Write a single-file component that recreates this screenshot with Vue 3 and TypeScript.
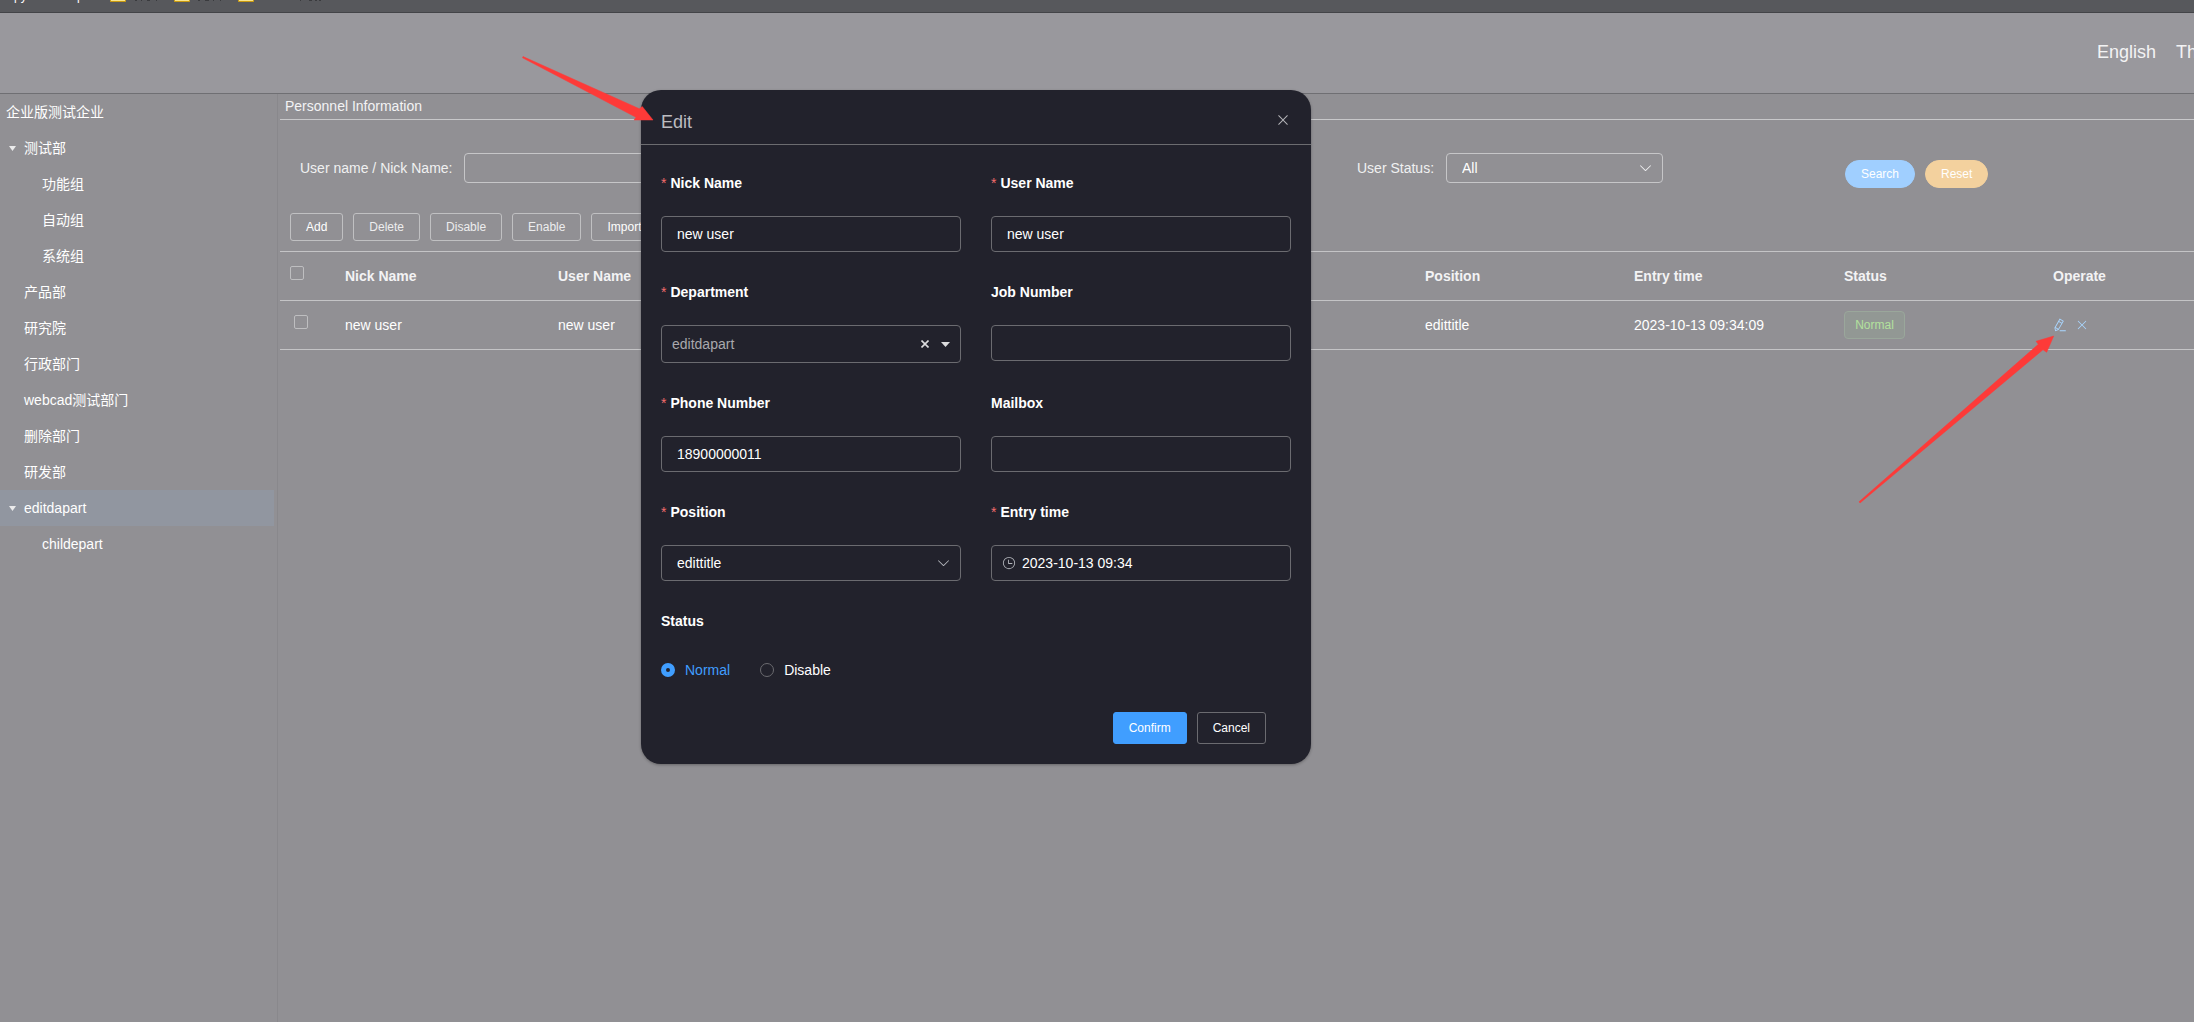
<script setup lang="ts">
import { ref } from 'vue'

interface Dept {
  name: string
  level: number
  open?: boolean
}

const departments: Dept[] = [
  { name: '企业版测试企业', level: 0 },
  { name: '测试部', level: 1, open: true },
  { name: '功能组', level: 2 },
  { name: '自动组', level: 2 },
  { name: '系统组', level: 2 },
  { name: '产品部', level: 1 },
  { name: '研究院', level: 1 },
  { name: '行政部门', level: 1 },
  { name: 'webcad测试部门', level: 1 },
  { name: '删除部门', level: 1 },
  { name: '研发部', level: 1 },
  { name: 'editdapart', level: 1, open: true },
  { name: 'childepart', level: 2 },
]
const current = ref('editdapart')

const keyword = ref('')
const statusFilter = ref('All')
const form = ref({
  nick: 'new user',
  user: 'new user',
  dept: 'editdapart',
  job: '',
  phone: '18900000011',
  mail: '',
  position: 'edittitle',
  entry: '2023-10-13 09:34',
  status: 'Normal',
})

const closePath =
  'M764.288 214.592 512 466.88 259.712 214.592a31.936 31.936 0 0 0-45.12 45.12L466.752 512 214.528 764.224a31.936 31.936 0 1 0 45.12 45.184L512 557.184l252.288 252.288a31.936 31.936 0 0 0 45.12-45.12L557.12 512.064l252.288-252.352a31.936 31.936 0 1 0-45.12-45.184z'
const downPath =
  'M831.872 340.864 512 652.672 192.128 340.864a30.592 30.592 0 0 0-42.752 0 29.12 29.12 0 0 0 0 41.6L489.664 714.24a32 32 0 0 0 44.672 0l340.288-331.712a29.12 29.12 0 0 0 0-41.728 30.592 30.592 0 0 0-42.752 0z'
const penPath =
  'm199.04 672.64 193.984 112 224-387.968-193.92-112-224 388.032zm-23.872 60.16 32.896 148.288 144.896-45.696L175.168 732.8zM455.04 229.248l193.92 112 56.704-98.112-193.984-112-56.64 98.112zM104.32 708.8l384-665.024 304.768 175.936L409.152 884.8h.064l-248.448 78.336L104.32 708.8zm384 254.272v-64h448v64h-448z'
const clockPath =
  'M512 896a384 384 0 1 0 0-768 384 384 0 0 0 0 768m0 64a448 448 0 1 1 0-896 448 448 0 0 1 0 896M480 256a32 32 0 0 1 32 32v256a32 32 0 0 1-64 0V288a32 32 0 0 1 32-32M480 512h256q32 0 32 32t-32 32H480q-32 0-32-32t32-32'
</script>

<template>
  <div class="page">
    <div class="bookmarks">
      <span class="bm first">py</span>
      <span class="bm second">p</span>
      <svg class="bm-icons" width="240" height="4" viewBox="100 0 240 4" aria-hidden="true">
        <g fill="#f9e48a" stroke="#c99a10">
          <path d="M110.500 -2V1.500H125.500V-2M174.500 -2V1.500H189.500V-2M238.500 -2V1.500H253.500V-2" />
        </g>
        <path
          d="M135 0h2v1h-2zM141 0h1v1h-1zM147 0h3v1h-3zM156 0h1v1h-1zM198 0h2v1h-2zM205 0h4v1h-4zM213 0h1v1h-1zM220 0h1v1h-1zM300 0h1v1h-1zM309 0h3v1h-3zM315 0h2v1h-2zM319 0h2v1h-2z"
          fill="#3a3b3e"
        />
      </svg>
    </div>

    <header class="topbar">
      <nav class="links">
        <a href="#">English</a>
        <a href="#">Th</a>
      </nav>
    </header>

    <div class="body">
      <aside class="side">
        <ul>
          <li
            v-for="d in departments"
            :key="d.name"
            :class="['node', 'l' + d.level, { active: d.name === current }]"
            @click="current = d.name"
          >
            <svg v-if="d.open" class="caret" width="7" height="6" viewBox="0 0 7 6" aria-hidden="true">
              <path d="M0 1H7L3.500 6Z" fill="#ebebec" />
            </svg>
            <span>{{ d.name }}</span>
          </li>
        </ul>
      </aside>

      <main class="main">
        <h1>Personnel Information</h1>

        <div class="filters">
          <div class="filter">
            <label for="kw">User name / Nick Name:</label>
            <input id="kw" v-model="keyword" class="fctl" type="text" />
          </div>
          <div class="filter">
            <label for="st">User Status:</label>
            <div class="wrap">
              <select id="st" v-model="statusFilter" class="fctl">
                <option>All</option>
              </select>
              <svg class="chev light" viewBox="0 0 1024 1024" aria-hidden="true"><path :d="downPath" /></svg>
            </div>
          </div>
          <div class="pills">
            <button type="button" class="pill search">Search</button>
            <button type="button" class="pill reset">Reset</button>
          </div>
        </div>

        <div class="tools">
          <button type="button" class="tool">Add</button>
          <button type="button" class="tool off">Delete</button>
          <button type="button" class="tool off">Disable</button>
          <button type="button" class="tool off">Enable</button>
          <button type="button" class="tool">Import</button>
        </div>

        <table>
          <colgroup>
            <col class="c-check" />
            <col class="c-name" />
            <col class="c-name" />
            <col />
            <col class="c-std" />
            <col class="c-status" />
            <col class="c-std" />
            <col class="c-op" />
          </colgroup>
          <thead>
            <tr>
              <th class="chk"><input type="checkbox" aria-label="Select all" /></th>
              <th>Nick Name</th>
              <th>User Name</th>
              <th></th>
              <th>Position</th>
              <th>Entry time</th>
              <th>Status</th>
              <th>Operate</th>
            </tr>
          </thead>
          <tbody>
            <tr>
              <td class="chk inner"><input type="checkbox" aria-label="Select new user" /></td>
              <td>new user</td>
              <td>new user</td>
              <td></td>
              <td>edittitle</td>
              <td>2023-10-13 09:34:09</td>
              <td><span class="tag">Normal</span></td>
              <td>
                <div class="ops">
                  <button type="button" aria-label="Edit">
                    <svg viewBox="0 0 1024 1024"><path :d="penPath" /></svg>
                  </button>
                  <button type="button" aria-label="Remove">
                    <svg viewBox="0 0 1024 1024"><path :d="closePath" /></svg>
                  </button>
                </div>
              </td>
            </tr>
          </tbody>
        </table>
      </main>
    </div>

    <div class="overlay">
      <section class="dialog" role="dialog" aria-labelledby="dlg-title">
        <div class="dlg-head">
          <h2 id="dlg-title">Edit</h2>
          <button type="button" class="x" aria-label="Close">
            <svg viewBox="0 0 1024 1024"><path :d="closePath" /></svg>
          </button>
        </div>
        <form class="form" @submit.prevent>
          <div class="grid">
            <div class="item">
              <label class="req" for="f-nick">Nick Name</label>
              <input id="f-nick" v-model="form.nick" class="ctl" type="text" />
            </div>
            <div class="item">
              <label class="req" for="f-user">User Name</label>
              <input id="f-user" v-model="form.user" class="ctl" type="text" />
            </div>
            <div class="item">
              <label class="req" for="f-dept">Department</label>
              <div class="wrap">
                <select id="f-dept" v-model="form.dept" class="ctl tree">
                  <option>editdapart</option>
                </select>
                <div class="tree-icons" aria-hidden="true">
                  <svg width="8" height="8" viewBox="0 0 8 8">
                    <path d="M0.500 0.500 7.500 7.500M7.500 0.500 0.500 7.500" stroke="#dcdcde" stroke-width="1.600" />
                  </svg>
                  <svg width="9" height="5" viewBox="0 0 9 5"><path d="M0 0H9L4.500 5Z" fill="#dcdcde" /></svg>
                </div>
              </div>
            </div>
            <div class="item">
              <label for="f-job">Job Number</label>
              <input id="f-job" v-model="form.job" class="ctl" type="text" />
            </div>
            <div class="item">
              <label class="req" for="f-phone">Phone Number</label>
              <input id="f-phone" v-model="form.phone" class="ctl" type="text" />
            </div>
            <div class="item">
              <label for="f-mail">Mailbox</label>
              <input id="f-mail" v-model="form.mail" class="ctl" type="text" />
            </div>
            <div class="item">
              <label class="req" for="f-pos">Position</label>
              <div class="wrap">
                <select id="f-pos" v-model="form.position" class="ctl">
                  <option>edittitle</option>
                </select>
                <svg class="chev" viewBox="0 0 1024 1024" aria-hidden="true"><path :d="downPath" /></svg>
              </div>
            </div>
            <div class="item">
              <label class="req" for="f-entry">Entry time</label>
              <div class="wrap">
                <input id="f-entry" v-model="form.entry" class="ctl date" type="text" />
                <svg class="clock" viewBox="0 0 1024 1024" aria-hidden="true"><path :d="clockPath" /></svg>
              </div>
            </div>
            <fieldset class="item">
              <legend>Status</legend>
              <div class="radios">
                <label v-for="s in ['Normal', 'Disable']" :key="s" :class="{ on: form.status === s }">
                  <input v-model="form.status" type="radio" name="status" :value="s" />
                  <span>{{ s }}</span>
                </label>
              </div>
            </fieldset>
          </div>
          <div class="foot">
            <button type="submit" class="confirm">Confirm</button>
            <button type="button" class="cancel">Cancel</button>
          </div>
        </form>
      </section>
    </div>

    <svg class="arrows" width="2194" height="1022" viewBox="0 0 2194 1022" aria-hidden="true">
      <path
        d="M523 56.500 639.300 108.700 642.300 106.500 653 120H634L636 117.300 522.500 57.800Z M1859 501.800 2038.300 344.300 2036 341.300 2053.700 336 2046.700 352.300 2043 349.700 1860 503Z"
        fill="#fd3a38"
        stroke="#fd3a38"
        stroke-width="0.500"
      />
    </svg>
  </div>
</template>

<style>
body {
  margin: 0;
  background: #919094;
}
</style>

<style scoped>
* {
  box-sizing: border-box;
}
.page {
  position: relative;
  display: flex;
  flex-direction: column;
  min-height: 100vh;
  overflow: hidden;
  background: #919094;
  color: #fff;
  font-family: 'Liberation Sans', 'Noto Sans CJK SC', sans-serif;
  font-size: 14px;
}
button,
input,
select {
  font-family: inherit;
  font-size: inherit;
  color: inherit;
  margin: 0;
}
button {
  cursor: pointer;
}
svg {
  display: block;
}

.bookmarks {
  display: flex;
  height: 13px;
  overflow: hidden;
  background: #57585c;
  border-bottom: 1px solid #434448;
}
.bm {
  margin-top: -11px;
  font-size: 12px;
  line-height: 14px;
  height: 14px;
}
.first {
  width: 63px;
  padding-left: 14px;
}
.second {
  width: 37px;
  padding-left: 14px;
}

.topbar {
  display: flex;
  justify-content: flex-end;
  align-items: center;
  height: 81px;
  padding-bottom: 2px;
  background: #99989d;
  border-bottom: 1px solid #6f6f73;
}
.links {
  display: flex;
  gap: 20px;
  width: 97px;
  overflow: hidden;
  font-size: 18px;
  white-space: nowrap;
}
.links a {
  color: #f3f3f4;
  text-decoration: none;
}

.body {
  display: flex;
  flex: 1;
}
.side {
  flex: none;
  width: 278px;
  padding-right: 3px;
  border-right: 1px solid #89888c;
}
.side ul {
  margin: 0;
  padding: 0;
  list-style: none;
}
.node {
  position: relative;
  height: 36px;
  padding-left: 6px;
  line-height: 36px;
  cursor: pointer;
}
.l1 {
  padding-left: 24px;
}
.l2 {
  padding-left: 42px;
}
.active {
  background: #9196a0;
}
.caret {
  position: absolute;
  left: 9px;
  top: 15px;
}

.main {
  flex: 1;
  min-width: 0;
  margin-left: 2px;
}
h1 {
  margin: 0;
  height: 26px;
  padding-left: 5px;
  border-bottom: 1px solid #c8c8ca;
  font-size: 14px;
  font-weight: 400;
  line-height: 25px;
  color: #f3f3f4;
}
.filters {
  display: grid;
  grid-template-columns: 1057fr 488fr 349fr;
  padding: 33px 0 30px 20px;
}
.filter {
  display: flex;
  gap: 12px;
  line-height: 30px;
  color: #f0f0f1;
}
.fctl {
  display: block;
  width: 217px;
  height: 30px;
  padding: 0 15px;
  appearance: none;
  background: transparent;
  border: 1px solid #c6c6c8;
  border-radius: 4px;
  color: #fff;
}
.wrap {
  position: relative;
}
.chev {
  position: absolute;
  right: 10px;
  top: 50%;
  width: 15px;
  height: 16px;
  margin-top: -8px;
  fill: #b4b6bc;
  pointer-events: none;
}
.light {
  fill: #f0f0f1;
}
.pills {
  display: flex;
  gap: 10px;
  height: 30px;
  padding-top: 7px;
}
.pill {
  height: 28px;
  padding: 0 15px;
  border: 1px solid transparent;
  border-radius: 14px;
  font-size: 12px;
  color: #fff;
}
.search {
  background: #a0cfff;
  border-color: #a0cfff;
}
.reset {
  background: #f3d19e;
  border-color: #f3d19e;
}
.tools {
  display: flex;
  gap: 10px;
  padding: 0 10px 10px;
}
.tool {
  height: 28px;
  padding: 0 15px;
  background: transparent;
  border: 1px solid #c0c0c2;
  border-radius: 3px;
  font-size: 12px;
}
.off {
  color: #ededee;
}

table {
  width: 100%;
  table-layout: fixed;
  border-collapse: separate;
  border-spacing: 0;
  border-top: 1px solid #c4c4c6;
}
.c-check {
  width: 55px;
}
.c-name {
  width: 213px;
}
.c-std {
  width: 209px;
}
.c-status {
  width: 210px;
}
.c-op {
  width: 151px;
}
th,
td {
  height: 49px;
  padding: 0 10px;
  border-bottom: 1px solid #c4c4c6;
  text-align: left;
}
th {
  color: #f3f3f4;
}
.chk {
  padding-bottom: 6px;
}
.inner {
  padding-left: 14px;
}
.chk input {
  display: block;
  width: 14px;
  height: 14px;
  appearance: none;
  border: 1px solid #bebec0;
  border-radius: 2px;
}
.tag {
  display: block;
  width: 61px;
  height: 28px;
  border: 1px solid #9aa79b;
  border-radius: 4px;
  background: #929894;
  color: #b3e19d;
  font-size: 12px;
  line-height: 26px;
  text-align: center;
}
.ops {
  display: flex;
  gap: 8px;
}
.ops button,
.x {
  padding: 0;
  border: 0;
  background: none;
}
.ops svg {
  width: 14px;
  height: 14px;
  fill: #a9d6ff;
}

.overlay {
  position: absolute;
  inset: 0;
  padding: 90px 0 0 641px;
}
.dialog {
  width: 670px;
  border-radius: 20px;
  background: #22222c;
  box-shadow: 0 1px 3px rgba(0, 0, 0, 0.3);
}
.dlg-head {
  display: flex;
  justify-content: space-between;
  height: 55px;
  padding: 20px 20px 0;
  border-bottom: 1px solid #6c6c70;
}
h2 {
  margin: 0;
  font-size: 18px;
  font-weight: 400;
  line-height: 24px;
  color: #bcbcc0;
}
.x {
  width: 16px;
  height: 20px;
}
.x svg {
  width: 16px;
  height: 16px;
  fill: #b4b4b8;
}
.form {
  padding: 20px;
}
.grid {
  display: grid;
  grid-template-columns: 1fr 1fr;
  gap: 22px 30px;
}
.item {
  min-width: 0;
  margin: 0;
  padding: 0;
  border: 0;
}
.item > label,
legend {
  display: block;
  padding: 0;
  margin-bottom: 15px;
  font-weight: 700;
  line-height: 36px;
}
.req::before {
  content: '*';
  margin-right: 4px;
  color: #f56c6c;
  font-weight: 400;
}
.ctl {
  display: block;
  width: 100%;
  height: 36px;
  padding: 0 15px;
  appearance: none;
  background: transparent;
  border: 1px solid #6b6b70;
  border-radius: 4px;
}
.tree {
  height: 38px;
  padding: 0 10px;
  color: #a9a9ad;
}
.tree-icons {
  position: absolute;
  right: 11px;
  top: 0;
  display: flex;
  align-items: center;
  gap: 12px;
  height: 38px;
  pointer-events: none;
}
.date {
  padding-left: 30px;
}
.clock {
  position: absolute;
  left: 11px;
  top: 11px;
  width: 14px;
  height: 14px;
  fill: #b4b6bc;
}
.radios {
  display: flex;
  gap: 30px;
  height: 32px;
}
.radios label {
  display: flex;
  align-items: center;
  gap: 10px;
}
.radios input {
  width: 14px;
  height: 14px;
  appearance: none;
  border: 1px solid #6b6b70;
  border-radius: 50%;
}
.radios input:checked {
  border: 5px solid #409eff;
}
.on {
  color: #409eff;
}
.foot {
  display: flex;
  justify-content: flex-end;
  gap: 10px;
  padding: 26px 25px 0 0;
}
.foot button {
  height: 32px;
  padding: 0 15px;
  border: 1px solid #6b6b70;
  border-radius: 3px;
  background: transparent;
  font-size: 12px;
}
.foot .confirm {
  background: #409eff;
  border-color: #409eff;
}
.arrows {
  position: absolute;
  left: 0;
  top: 0;
  pointer-events: none;
}
</style>
